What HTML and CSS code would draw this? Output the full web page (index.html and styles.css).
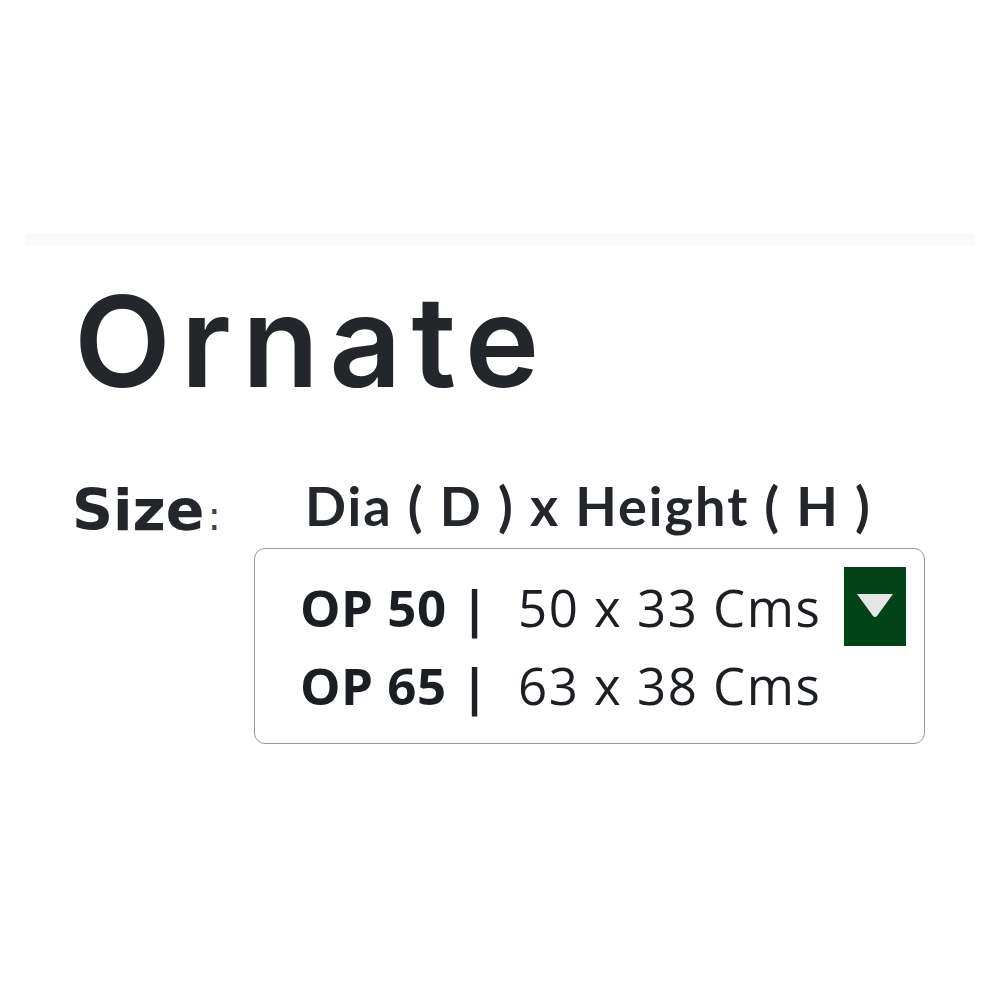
FILE: index.html
```html
<!DOCTYPE html>
<html>
<head>
<meta charset="utf-8">
<link rel="stylesheet" href="styles.css">
</head>
<body>
<div class="page">
  <div class="rule"></div>
  <h1 class="title">Ornate</h1>
  <div class="size-row">
    <div class="size-label">Size<span class="colon">:</span></div>
    <div class="size-body">
      <div class="size-head">Dia ( D ) x Height ( H )</div>
      <div class="select">
        <div class="options">
          <div class="opt"><span class="code">OP 50 |</span><span class="dim">50 x 33 Cms</span></div>
          <div class="opt"><span class="code">OP 65 |</span><span class="dim">63 x 38 Cms</span></div>
        </div>
        <div class="arrow">
          <svg width="40" height="26" viewBox="0 0 40 26"><path d="M2 2 H38 L22 24 Q20 26 18 24 Z" fill="#e6e6e6"/></svg>
        </div>
      </div>
    </div>
  </div>
</div>
</body>
</html>
```
FILE: styles.css
```css
html, body { margin: 0; padding: 0; background: #fff; }
.page { width: 1000px; height: 1000px; padding-top: 233px; box-sizing: border-box; }
.rule { margin: 0 25px 0 25px; height: 12px; background: #fafafa; }
.title {
  margin: 34px 0 0 74px;
  font-family: "Inter", sans-serif;
  font-weight: 600;
  font-size: 126px;
  line-height: 124px;
  color: #23262b;
  letter-spacing: 10px;
}
.size-row { display: flex; margin: 73px 0 0 72px; }
.size-label {
  font-family: "DejaVu Sans", sans-serif;
  font-weight: 700;
  font-size: 57px;
  line-height: 60px;
  padding-top: 4px;
  color: #23262b;
  width: 182px;
}
.colon { font-weight: 400; font-size: 40px; color: #444; margin-left: 3px; }
.size-body { display: flex; flex-direction: column; }
.size-head {
  margin-left: 51px;
  font-family: "Lato", sans-serif;
  font-weight: 700;
  font-size: 54px;
  line-height: 60px;
  color: #23262b;
  letter-spacing: 2px;
}
.select {
  margin-top: 12px;
  width: 671px;
  height: 196px;
  box-sizing: border-box;
  border: 1.5px solid #9a9a9a;
  border-radius: 11px;
  display: flex;
  justify-content: space-between;
  padding: 18px 18px 0 45px;
}
.options { display: flex; flex-direction: column; padding-top: 1px; }
.opt {
  display: flex;
  font-family: "Open Sans", sans-serif;
  font-size: 51px;
  line-height: 78px;
  color: #1b1e22;
}
.code { font-weight: 700; width: 218px; letter-spacing: 0.5px; }
.dim { font-weight: 400; letter-spacing: 1.5px; }
.arrow {
  width: 62px; height: 79px;
  background: #004418;
  display: flex; align-items: center; justify-content: center;
}
.arrow svg { margin-top: -3px; }
```
